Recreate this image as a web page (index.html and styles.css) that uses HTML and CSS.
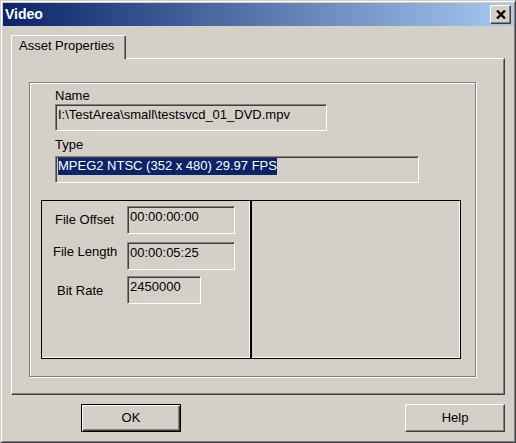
FILE: index.html
```html
<!DOCTYPE html>
<html lang="en">
<head>
    <meta charset="UTF-8">
    <meta name="viewport" content="width=device-width, initial-scale=1.0">
    <title>Video</title>
    <link rel="stylesheet" href="styles.css">
</head>
<body>
    <div class="window">
        <div class="titlebar">
            <span class="title">Video</span>
            <button class="close" aria-label="Close">
                <svg width="10" height="9" viewBox="0 0 10 9">
                    <path d="M1 0.5 L9 8.5 M9 0.5 L1 8.5" stroke="#000" stroke-width="2.3" fill="none"/>
                </svg>
            </button>
        </div>

        <div class="tabs">
            <div class="tab">Asset Properties</div>
        </div>

        <div class="panel">
            <div class="group">
                <div class="caption">Name</div>
                <div class="field name-field">I:\TestArea\small\testsvcd_01_DVD.mpv</div>
                <div class="caption type-caption">Type</div>
                <div class="field type-field"><span class="sel">MPEG2 NTSC (352 x 480) 29.97 FPS</span></div>

                <div class="boxes">
                    <div class="box">
                        <div class="row row-offset">
                            <span class="label label-offset">File Offset</span>
                            <div class="field time-field">00:00:00:00</div>
                        </div>
                        <div class="row row-length">
                            <span class="label label-length">File Length</span>
                            <div class="field time-field">00:00:05:25</div>
                        </div>
                        <div class="row row-rate">
                            <span class="label label-rate">Bit Rate</span>
                            <div class="field rate-field">2450000</div>
                        </div>
                    </div>
                    <div class="box"></div>
                </div>
            </div>
        </div>

        <div class="buttons">
            <button class="btn default">OK</button>
            <button class="btn">Help</button>
        </div>
    </div>
</body>
</html>
```

FILE: styles.css
```css
* {
    margin: 0;
    padding: 0;
    box-sizing: border-box;
}

html, body {
    width: 516px;
    height: 443px;
    overflow: hidden;
    background: #d4d0c8;
}

body {
    font-family: "Liberation Sans", Arial, sans-serif;
    font-size: 13px;
    line-height: 17px;
    color: #000;
}

button {
    font: inherit;
    color: inherit;
    background: #d4d0c8;
    outline: none;
}

.window {
    width: 516px;
    height: 443px;
    padding: 2px;
    background: #d4d0c8;
    border: 1px solid;
    border-color: #d4d0c8 #404040 #404040 #d4d0c8;
    box-shadow: inset 1px 1px #fff, inset -1px -1px #808080;
    display: flex;
    flex-direction: column;
}

/* title bar */
.titlebar {
    height: 23px;
    display: flex;
    align-items: center;
    justify-content: space-between;
    padding: 0 2px 0 2px;
    background: linear-gradient(to right, #0a246a, #a6caf0);
}

.title {
    font-size: 14px;
    font-weight: bold;
    line-height: 23px;
    color: #fff;
}

.close {
    width: 21px;
    height: 19px;
    display: flex;
    align-items: center;
    justify-content: center;
    border: 1px solid;
    border-color: #fff #404040 #404040 #fff;
    box-shadow: inset -1px -1px #808080;
}

/* tab strip */
.tabs {
    display: flex;
    margin: 9px 8px 0 8px;
}

.tab {
    position: relative;
    z-index: 1;
    width: 115px;
    height: 24px;
    margin-bottom: -1px;
    padding: 1px 0 0 7px;
    background: #d4d0c8;
    border: 1px solid;
    border-bottom: none;
    border-color: #fff #404040 #fff #fff;
    border-radius: 2px 2px 0 0;
    box-shadow: inset -1px 0 #808080;
}

.panel {
    width: 494px;
    height: 337px;
    margin: 0 8px;
    padding: 23px 0 0 17px;
    border: 1px solid;
    border-color: #fff #404040 #404040 #fff;
    box-shadow: inset -1px -1px #808080;
}

/* etched group */
.group {
    width: 447px;
    height: 295px;
    padding: 4px 0 0 11px;
    border: 1px solid #808080;
    box-shadow: inset 1px 1px #fff, 1px 1px #fff;
}

.caption {
    margin-left: 14px;
}

.type-caption {
    margin-top: 5px;
}

.field {
    height: 27px;
    padding: 1px 2px 0 2px;
    border: 1px solid;
    border-color: #808080 #fff #fff #808080;
    box-shadow: inset 1px 1px #404040, inset -1px -1px #d4d0c8;
    white-space: nowrap;
    overflow: hidden;
}

.name-field {
    width: 272px;
    margin-left: 14px;
}

.type-field {
    width: 364px;
    margin: 3px 0 0 14px;
    padding-top: 0;
}

.sel {
    display: inline-block;
    line-height: 15px;
    padding-bottom: 2px;
    background: #0a246a;
    color: #fff;
}

/* two framed boxes */
.boxes {
    display: flex;
    margin-top: 17px;
}

.box {
    width: 210px;
    height: 159px;
    border: 1px solid #000;
    box-shadow: inset -1px -1px #fff;
}

.row {
    display: flex;
    align-items: flex-start;
}

.row-offset {
    margin-top: 5px;
}

.row-length {
    margin-top: 8px;
}

.row-rate {
    margin-top: 6px;
}

.label {
    width: 85px;
    white-space: nowrap;
}

.label-offset {
    padding: 5px 0 0 13px;
}

.label-length {
    padding: 1px 0 0 11px;
}

.label-rate {
    padding: 6px 0 0 15px;
}

.time-field {
    width: 108px;
    height: 28px;
}

.rate-field {
    width: 74px;
    height: 28px;
}

/* dialog buttons */
.buttons {
    display: flex;
    justify-content: space-between;
    margin-top: 9px;
    padding: 0 8px 0 78px;
}

.btn {
    width: 100px;
    height: 28px;
    line-height: 26px;
    text-align: center;
    border: 1px solid;
    border-color: #fff #404040 #404040 #fff;
    box-shadow: inset -1px -1px #808080;
}

.btn.default {
    border-color: #000;
    box-shadow: inset 1px 1px #fff, inset -1px -1px #404040, inset -2px -2px #808080;
}
```
